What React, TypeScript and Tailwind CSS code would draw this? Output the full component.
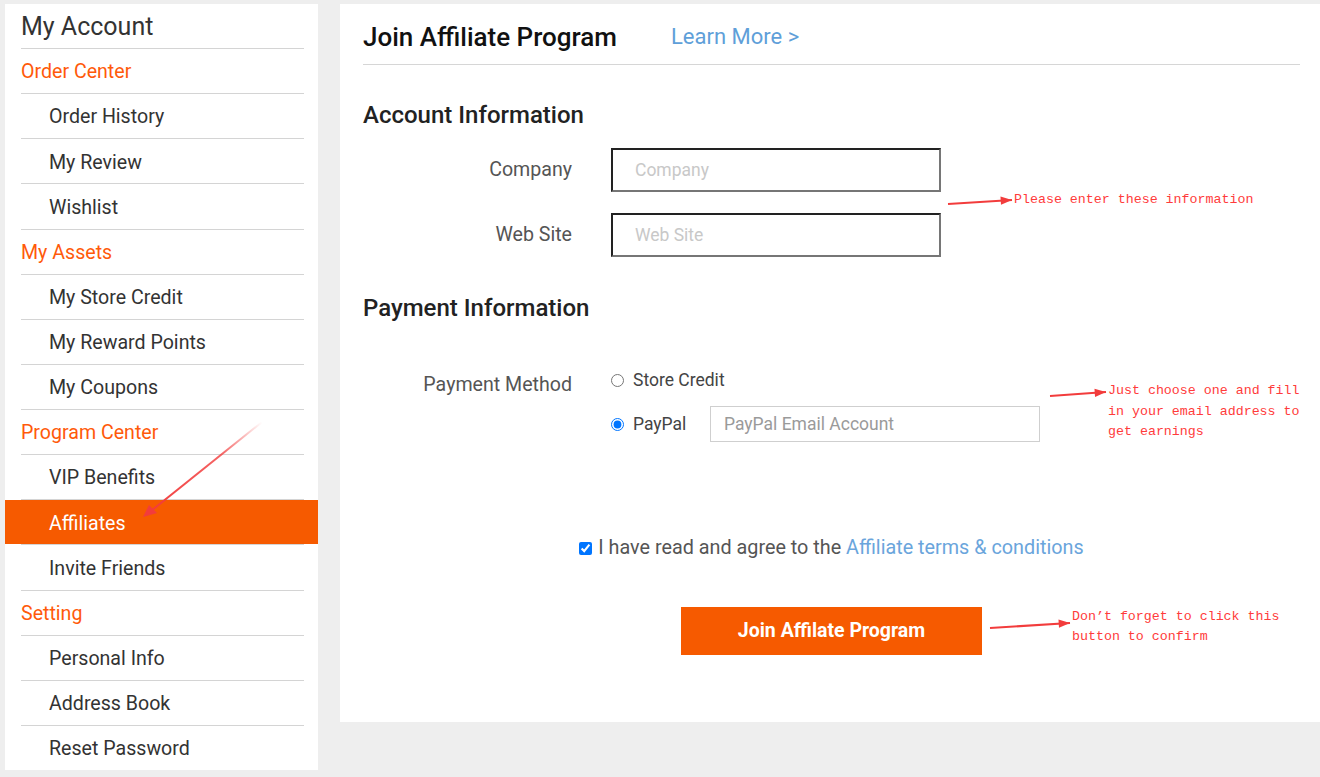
import React from "react";

const menu: { label: string; kind: "cat" | "item"; active?: boolean }[] = [
  { label: "Order Center", kind: "cat" },
  { label: "Order History", kind: "item" },
  { label: "My Review", kind: "item" },
  { label: "Wishlist", kind: "item" },
  { label: "My Assets", kind: "cat" },
  { label: "My Store Credit", kind: "item" },
  { label: "My Reward Points", kind: "item" },
  { label: "My Coupons", kind: "item" },
  { label: "Program Center", kind: "cat" },
  { label: "VIP Benefits", kind: "item" },
  { label: "Affiliates", kind: "item", active: true },
  { label: "Invite Friends", kind: "item" },
  { label: "Setting", kind: "cat" },
  { label: "Personal Info", kind: "item" },
  { label: "Address Book", kind: "item" },
  { label: "Reset Password", kind: "item" },
];

function Sidebar() {
  return (
    <aside className="w-[313px] h-[766px] bg-white shrink-0 overflow-hidden">
      <div className="h-[44px] flex items-center px-[16px] pt-[2px] text-[25px] text-[#333]">My Account</div>
      {menu.map((m) => (
        <div key={m.label}>
          <div className="ml-[16px] mr-[14px] border-t border-[#d4d4d4]" />
          <div
            className={
              m.active
                ? "h-[44.14px] flex items-center pt-[2px] pl-[44px] bg-[#f65a00] text-white text-[19.6px]"
                : m.kind === "cat"
                ? "h-[44.14px] flex items-center pt-[2px] pl-[16px] text-[#ff5a0a] text-[19.6px]"
                : "h-[44.14px] flex items-center pt-[2px] pl-[44px] text-[#333] text-[19.6px]"
            }
          >
            {m.label}
          </div>
        </div>
      ))}
    </aside>
  );
}

function Arrow({ x1, y1, x2, y2, w, h }: { x1: number; y1: number; x2: number; y2: number; w: number; h: number }) {
  const ang = Math.atan2(y2 - y1, x2 - x1);
  const len = 12;
  const spread = 0.35;
  const ax = x2 - len * Math.cos(ang - spread);
  const ay = y2 - len * Math.sin(ang - spread);
  const bx = x2 - len * Math.cos(ang + spread);
  const by = y2 - len * Math.sin(ang + spread);
  return (
    <svg width={w} height={h} className="block">
      <line x1={x1} y1={y1} x2={x2} y2={y2} stroke="#f23c3c" strokeWidth="2" />
      <polygon points={`${x2},${y2} ${ax},${ay} ${bx},${by}`} fill="#f23c3c" />
    </svg>
  );
}

export default function App() {
  return (
    <div
      className="relative w-[1320px] h-[777px] bg-[#eeeeee] pt-[4px] pl-[5px] flex gap-[22px] overflow-hidden"
      style={{ fontFamily: "Roboto, 'Liberation Sans', sans-serif" }}
    >
      <Sidebar />

      <main className="w-[980px] h-[718px] bg-white pl-[23px] pr-[20px] shrink-0">
        <div className="flex items-center pt-[18px] pb-[12px] border-b border-[#d6d6d6]">
          <h1 className="text-[26px] leading-[30px] font-medium text-[#111] w-[308px]">Join Affiliate Program</h1>
          <a className="text-[22px] leading-[30px] text-[#5f9fd9]">Learn More &gt;</a>
        </div>

        <h2 className="mt-[35px] text-[24px] leading-[30px] font-medium text-[#222]">Account Information</h2>

        <div className="mt-[18px] flex items-center">
          <label className="w-[209px] text-right text-[19.6px] text-[#555]">Company</label>
          <input
            className="ml-[39px] w-[330px] h-[44px] border-2 border-t-[#222] border-l-[#222] border-b-[#767676] border-r-[#767676] pl-[22px] text-[17.5px] placeholder:text-[#c8c8c8] outline-none"
            placeholder="Company"
            readOnly
          />
        </div>
        <div className="mt-[21px] flex items-center">
          <label className="w-[209px] text-right text-[19.6px] text-[#555]">Web Site</label>
          <input
            className="ml-[39px] w-[330px] h-[44px] border-2 border-t-[#222] border-l-[#222] border-b-[#767676] border-r-[#767676] pl-[22px] text-[17.5px] placeholder:text-[#c8c8c8] outline-none"
            placeholder="Web Site"
            readOnly
          />
        </div>

        <h2 className="mt-[36px] text-[24px] leading-[30px] font-medium text-[#222]">Payment Information</h2>

        <div className="mt-[43px] flex items-start">
          <label className="w-[209px] text-right text-[19.6px] leading-[28px] text-[#555] mt-[5px]">Payment Method</label>
          <div className="ml-[39px] flex flex-col gap-[12px]">
            <label className="h-[28px] flex items-center text-[17.5px] text-[#444]">
              <input type="radio" name="pay" className="w-[13px] h-[13px] m-0 mr-[9px]" readOnly />
              Store Credit
            </label>
            <div className="flex items-center">
              <label className="flex items-center text-[17.5px] text-[#444] w-[99px]">
                <input type="radio" name="pay" defaultChecked className="w-[13px] h-[13px] m-0 mr-[9px]" />
                PayPal
              </label>
              <input
                className="w-[330px] h-[36px] border border-[#cfcfcf] pl-[13px] text-[17.5px] placeholder:text-[#9a9a9a] outline-none"
                placeholder="PayPal Email Account"
                readOnly
              />
            </div>
          </div>
        </div>

        <div className="mt-[92px] flex items-center justify-center text-[19.8px] leading-[28px] text-[#555]">
          <input type="checkbox" defaultChecked className="w-[13px] h-[13px] m-0 mr-[6px]" />
          <span>
            I have read and agree to the <a className="text-[#6aa5dc]">Affiliate terms &amp; conditions</a>
          </span>
        </div>

        <div className="mt-[45px] flex justify-center">
          <button className="w-[301px] h-[48px] bg-[#f65a00] text-white text-[19.5px] font-bold">Join Affilate Program</button>
        </div>
      </main>

      {/* annotations */}
      <div className="absolute left-[130px] top-[416px]">
        <svg width="140" height="110" className="block">
          <defs>
            <linearGradient id="fade" x1="1" y1="0" x2="0" y2="1">
              <stop offset="0" stopColor="#f23c3c" stopOpacity="0" />
              <stop offset="0.35" stopColor="#f23c3c" stopOpacity="0.8" />
              <stop offset="1" stopColor="#f23c3c" />
            </linearGradient>
          </defs>
          <line x1="132" y1="6" x2="16" y2="99" stroke="url(#fade)" strokeWidth="2" />
          <polygon points="13,101 19,89 27,97" fill="#f23c3c" />
        </svg>
      </div>

      <div className="absolute left-[946px] top-[190px] flex items-center">
        <Arrow x1={2} y1={13} x2={66} y2={9} w={68} h={18} />
        <span className="text-[13.3px] leading-[20px] text-[#ff3b3b]" style={{ fontFamily: "'Liberation Mono', monospace" }}>
          Please enter these information
        </span>
      </div>

      <div className="absolute left-[1048px] top-[381px] flex items-start">
        <div className="mt-[2px]">
          <Arrow x1={2} y1={13} x2={58} y2={9} w={60} h={18} />
        </div>
        <span className="text-[13.3px] leading-[20.5px] text-[#ff3b3b] w-[200px]" style={{ fontFamily: "'Liberation Mono', monospace" }}>
          Just choose one and fill in your email address to get earnings
        </span>
      </div>

      <div className="absolute left-[988px] top-[607px] flex items-start">
        <div className="mt-[8px]">
          <Arrow x1={2} y1={13} x2={82} y2={8} w={84} h={18} />
        </div>
        <span className="text-[13.3px] leading-[20px] text-[#ff3b3b] w-[218px]" style={{ fontFamily: "'Liberation Mono', monospace" }}>
          Don’t forget to click this button to confirm
        </span>
      </div>
    </div>
  );
}
